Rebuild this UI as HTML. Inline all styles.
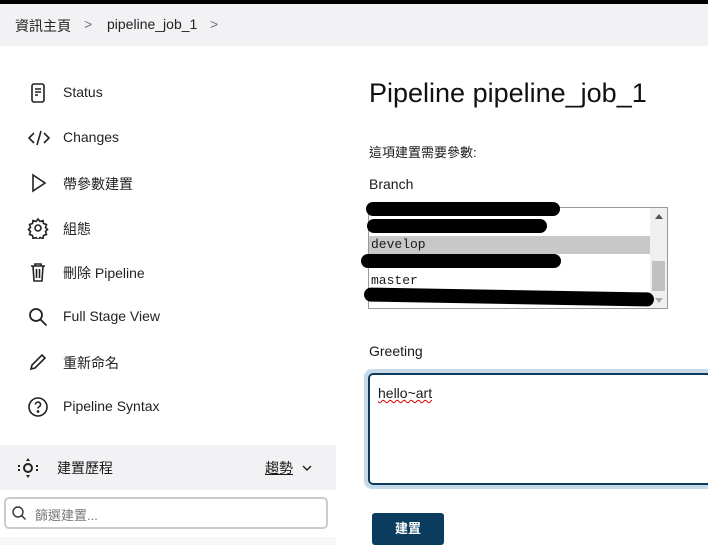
<!DOCTYPE html>
<html><head><meta charset="utf-8"><style>
*{margin:0;padding:0;box-sizing:border-box}
body{width:708px;height:545px;overflow:hidden;background:#fff;font-family:"Liberation Sans","Noto Sans CJK TC",sans-serif;color:#1a1a1a;position:relative}
.top{position:absolute;left:0;top:0;width:708px;height:4px;background:#000}
.bc{position:absolute;left:0;top:4px;width:708px;height:42px;background:#f2f2f5;font-size:14px;color:#222}
.bc span{position:absolute;top:12px}
.item{position:absolute;left:0;width:336px;height:40px;font-size:14px;color:#222}
.item .t{position:absolute;left:63px;top:11px}
.item svg{position:absolute;left:27px;top:9px}
.abs{position:absolute}
</style></head><body>
<div class="top"></div>
<div class="bc"><span style="left:15px">資訊主頁</span><span style="left:84px;color:#777">&gt;</span><span style="left:107px">pipeline_job_1</span><span style="left:210px;color:#777">&gt;</span></div>

<div class="item" style="top:73px"><svg width="22" height="22" viewBox="0 0 22 22" fill="none" stroke="#222" stroke-width="1.6"><rect x="5" y="2" width="12" height="18" rx="2"/><path d="M8 7h6M8 10h6M8 13h3"/></svg><span class="t">Status</span></div>
<div class="item" style="top:118px"><svg width="24" height="22" viewBox="0 0 24 22" fill="none" stroke="#222" stroke-width="1.6"><path d="M7 6l-5 5 5 5M17 6l5 5-5 5M14 4l-4 14"/></svg><span class="t">Changes</span></div>
<div class="item" style="top:163px"><svg width="22" height="22" viewBox="0 0 22 22" fill="none" stroke="#222" stroke-width="1.6"><path d="M6 3l12 8-12 8z"/></svg><span class="t">帶參數建置</span></div>
<div class="item" style="top:208px"><svg width="22" height="22" viewBox="0 0 22 22" fill="none" stroke="#222" stroke-width="1.6"><circle cx="11" cy="11" r="3"/><path d="M11 2l2 2.5 3-1 .5 3 3 1-1 3 2 2-2 2 1 3-3 1-.5 3-3-1-2 2.5-2-2.5-3 1-.5-3-3-1 1-3-2-2 2-2-1-3 3-1 .5-3 3 1z"/></svg><span class="t">組態</span></div>
<div class="item" style="top:252px"><svg width="22" height="22" viewBox="0 0 22 22" fill="none" stroke="#222" stroke-width="1.6"><path d="M4 5h14M8 5V3h6v2M6 5l1 15h8l1-15M9.5 8v9M12.5 8v9"/></svg><span class="t">刪除 Pipeline</span></div>
<div class="item" style="top:297px"><svg width="22" height="22" viewBox="0 0 22 22" fill="none" stroke="#222" stroke-width="1.8"><circle cx="9" cy="9" r="6"/><path d="M13.5 13.5l6 6"/></svg><span class="t">Full Stage View</span></div>
<div class="item" style="top:342px"><svg width="22" height="22" viewBox="0 0 22 22" fill="none" stroke="#222" stroke-width="1.6"><path d="M4 18l1-4L15 4l3 3L8 17z"/></svg><span class="t">重新命名</span></div>
<div class="item" style="top:387px"><svg width="22" height="22" viewBox="0 0 22 22" fill="none" stroke="#222" stroke-width="1.6"><circle cx="11" cy="11" r="9"/><path d="M8.5 8.5a2.5 2.5 0 1 1 3.5 2.3c-.8.4-1 1-1 1.7"/><circle cx="11" cy="15.5" r=".6" fill="#222"/></svg><span class="t">Pipeline Syntax</span></div>

<div class="abs" style="left:0;top:445px;width:336px;height:45px;background:#f2f2f5;font-size:14px">
<svg class="abs" style="left:17px;top:11px" width="22" height="24" viewBox="0 0 22 24" fill="none" stroke="#222" stroke-width="2"><circle cx="11" cy="12" r="4"/><path d="M11 2l-2 3h4zM11 22l-2-3h4z" fill="#222" stroke="none"/><path d="M2 9v2M2 13v2M20 9v2M20 13v2"/></svg>
<span class="abs" style="left:57px;top:13px">建置歷程</span>
<span class="abs" style="left:265px;top:13px;text-decoration:underline">趨勢</span>
<svg class="abs" style="left:301px;top:18px" width="12" height="10" viewBox="0 0 12 10" fill="none" stroke="#222" stroke-width="1.4"><path d="M2 3l4 4 4-4"/></svg>
</div>
<div class="abs" style="left:4px;top:497px;width:324px;height:32px;border:2px solid #c8ccd0;border-radius:5px;font-size:13px;color:#777">
<svg class="abs" style="left:5px;top:6px" width="16" height="16" viewBox="0 0 16 16" fill="none" stroke="#333" stroke-width="1.4"><circle cx="7" cy="7" r="5"/><path d="M10.5 10.5l4 4"/></svg>
<span class="abs" style="left:29px;top:6px">篩選建置...</span></div>
<div class="abs" style="left:0;top:537px;width:336px;height:8px;background:#f7f7f9"></div>

<div class="abs" style="left:369px;top:78px;font-size:27px;color:#111">Pipeline pipeline_job_1</div>
<div class="abs" style="left:369px;top:142px;font-size:13px">這項建置需要參數:</div>
<div class="abs" style="left:369px;top:176px;font-size:14px">Branch</div>
<div class="abs" style="left:368px;top:207px;width:300px;height:102px;border:1px solid #999;background:#fff;font-family:'Liberation Mono',monospace;font-size:13px;overflow:hidden">
<div class="abs" style="left:0;top:28px;width:281px;height:18px;background:#c8c8c8"></div>
<span class="abs" style="left:2px;top:29px">develop</span>
<span class="abs" style="left:2px;top:65px">master</span>
<div class="abs" style="left:281px;top:0;width:17px;height:100px;background:#f0f0f0"></div>
<div class="abs" style="left:283px;top:53px;width:13px;height:30px;background:#c1c1c1"></div>
<div class="abs" style="left:286px;top:6px;border:4px solid transparent;border-bottom:5px solid #555;border-top:0"></div>
<div class="abs" style="left:286px;top:90px;border:4px solid transparent;border-top:5px solid #aaa;border-bottom:0"></div>
</div>
<div class="abs" style="left:366px;top:202px;width:194px;height:14px;background:#000;border-radius:7px"></div>
<div class="abs" style="left:367px;top:219px;width:180px;height:14px;background:#000;border-radius:7px"></div>
<div class="abs" style="left:361px;top:254px;width:200px;height:14px;background:#000;border-radius:7px"></div>
<div class="abs" style="left:364px;top:290px;width:290px;height:14px;background:#000;border-radius:7px;transform:rotate(1deg)"></div>

<div class="abs" style="left:369px;top:343px;font-size:14px">Greeting</div>
<div class="abs" style="left:364px;top:369px;width:360px;height:120px;border:4px solid #c5d9e8;border-radius:8px"></div>
<div class="abs" style="left:368px;top:373px;width:350px;height:112px;border:2px solid #0d3a5a;border-radius:5px;background:#fff"></div>
<div class="abs" style="left:378px;top:385px;font-size:14px;text-decoration:underline wavy #d00;text-decoration-thickness:1px">hello~art</div>

<div class="abs" style="left:372px;top:513px;width:72px;height:32px;background:#0b3c5d;border-radius:3px;color:#fff;font-size:13px;font-weight:bold;text-align:center;line-height:32px">建置</div>
</body></html>
